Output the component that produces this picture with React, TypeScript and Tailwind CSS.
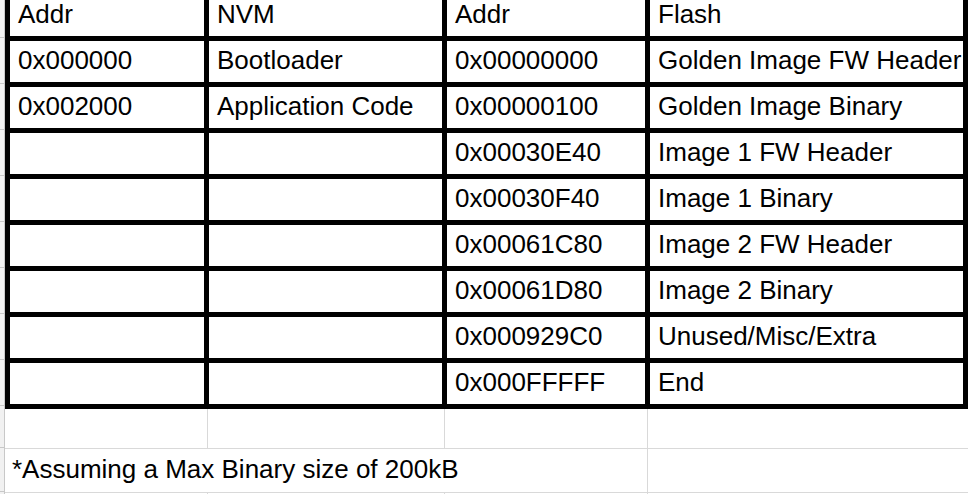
import React from 'react'

const rows = [
  ['Addr', 'NVM', 'Addr', 'Flash'],
  ['0x000000', 'Bootloader', '0x00000000', 'Golden Image FW Header'],
  ['0x002000', 'Application Code', '0x00000100', 'Golden Image Binary'],
  ['', '', '0x00030E40', 'Image 1 FW Header'],
  ['', '', '0x00030F40', 'Image 1 Binary'],
  ['', '', '0x00061C80', 'Image 2 FW Header'],
  ['', '', '0x00061D80', 'Image 2 Binary'],
  ['', '', '0x000929C0', 'Unused/Misc/Extra'],
  ['', '', '0x000FFFFF', 'End'],
]

// heights of the row-header segments on the far left
const stripRows = [38, 46, 46, 46, 46, 46, 46, 46, 46, 42, 44, 20]

export default function App() {
  return (
    <div
      className="flex h-[494px] w-[968px] overflow-hidden bg-white text-black"
      style={{ fontFamily: '"Liberation Sans", Arial, sans-serif' }}
    >
      <div className="flex w-[5px] shrink-0 flex-col border-r border-[#c8c8c8] bg-[#f1f1f1]">
        {stripRows.map((h, i) => (
          <div key={i} className="shrink-0 border-b border-[#c8c8c8]" style={{ height: h }} />
        ))}
      </div>

      <div className="flex flex-1 flex-col">
        <div className="-mt-[10px] grid grid-cols-[194px_233px_198px_313px] gap-[5px] border-[5px] border-black bg-black">
          {rows.flatMap((row, r) =>
            row.map((cell, c) => (
              <div
                key={`${r}-${c}`}
                className="flex h-[41px] items-center overflow-hidden whitespace-nowrap bg-white pb-[3px] pl-[8px] text-[26px]"
              >
                {cell}
              </div>
            ))
          )}
        </div>

        <div className="grid grid-cols-[203px_237px_203px_1fr]">
          <div className="h-[40px] border-r border-b border-[#d9d9d9]" />
          <div className="h-[40px] border-r border-b border-[#d9d9d9]" />
          <div className="h-[40px] border-r border-b border-[#d9d9d9]" />
          <div className="h-[40px] border-b border-[#d9d9d9]" />

          <div className="col-span-3 flex h-[44px] items-center whitespace-nowrap border-r border-b border-[#d9d9d9] pb-[3px] pl-[7px] text-[26px]">
            *Assuming a Max Binary size of 200kB
          </div>
          <div className="h-[44px] border-b border-[#d9d9d9]" />

          <div className="h-[20px] border-r border-[#d9d9d9]" />
          <div className="h-[20px] border-r border-[#d9d9d9]" />
          <div className="h-[20px] border-r border-[#d9d9d9]" />
          <div className="h-[20px]" />
        </div>
      </div>
    </div>
  )
}
